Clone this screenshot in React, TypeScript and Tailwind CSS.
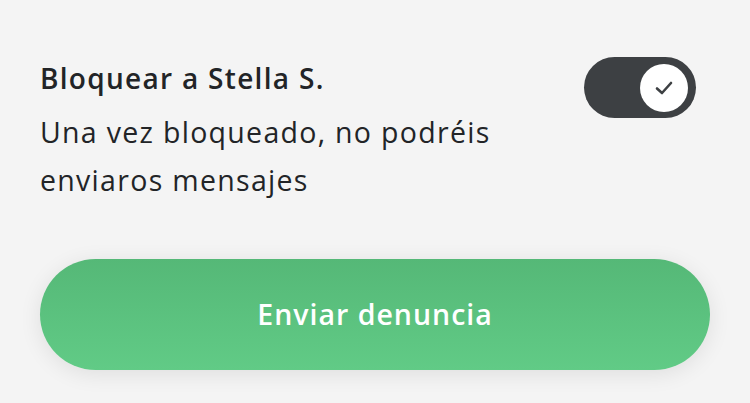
import React from "react";

export default function App() {
  return (
    <div className="w-[750px] h-[403px] bg-[#f4f4f4] overflow-hidden" style={{ fontFamily: "'Open Sans', 'Noto Sans', sans-serif" }}>
      <div className="px-[40px] pt-[57px]">
        <div className="flex justify-between items-start">
          <div className="pt-[4px]">
            <div className="text-[28px] leading-[34px] font-semibold tracking-[1.3px] text-[#222427]">Bloquear a Stella S.</div>
            <div className="mt-[13px] text-[28.5px] leading-[48px] tracking-[1.3px] text-[#222427]">
              Una vez bloqueado, no podréis
              <br />
              enviaros mensajes
            </div>
          </div>
          <div className="mr-[14px] w-[112px] h-[61px] rounded-full bg-[#3d4043] flex items-center justify-end pr-[8px]">
            <div className="w-[48px] h-[48px] rounded-full bg-white flex items-center justify-center">
              <svg width="22" height="22" viewBox="0 0 22 22" fill="none">
                <path d="M4 11.5 L9 16 L18 6" stroke="#3d4043" strokeWidth="2.6" strokeLinecap="round" strokeLinejoin="round" />
              </svg>
            </div>
          </div>
        </div>
        <button className="mt-[55px] w-[670px] h-[111px] rounded-full bg-gradient-to-b from-[#55b877] to-[#61cb86] shadow-[0_4px_22px_rgba(0,0,0,0.09)] flex items-center justify-center text-white text-[28.5px] tracking-[1px] font-semibold">
          Enviar denuncia
        </button>
      </div>
    </div>
  );
}
